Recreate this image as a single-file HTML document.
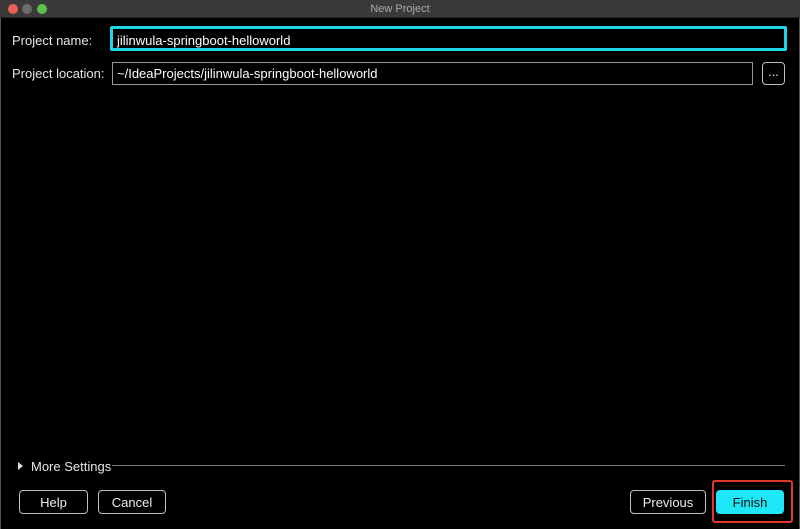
<!DOCTYPE html><html><head><style>
body{margin:0;width:800px;height:529px;background:#000;font-family:"Liberation Sans",sans-serif;position:relative;overflow:hidden;color:#e6e6e6}
.a{position:absolute}
.t{font-size:13px}
.btn{position:absolute;border:1px solid #bdbdbd;border-radius:4px;box-sizing:border-box;color:#eee;font-size:13px;text-align:center;line-height:23px}
</style></head><body>
<div class="a" style="left:0;top:0;width:800px;height:17px;background:#3a3a3a;border-bottom:1px solid #222"></div>
<div class="a" style="left:8px;top:4px;width:10px;height:10px;border-radius:50%;background:#ec5f57"></div>
<div class="a" style="left:22px;top:4px;width:10px;height:10px;border-radius:50%;background:#6b6b6b"></div>
<div class="a" style="left:37px;top:4px;width:10px;height:10px;border-radius:50%;background:#5ec04c"></div>
<div class="a" style="left:0;top:3px;width:800px;text-align:center;font-size:11px;color:#aaa">New Project</div>
<div class="a" style="left:0;top:18px;width:1px;height:511px;background:#555"></div>
<div class="a" style="left:799px;top:18px;width:1px;height:511px;background:#555"></div>
<div class="a t" style="left:12px;top:33px">Project name:</div>
<div class="a" style="left:110px;top:26px;width:677px;height:25px;box-sizing:border-box;border:3px solid #1ed6e8;border-radius:2px"></div>
<div class="a t" style="left:117px;top:33px;color:#fff">jilinwula-springboot-helloworld</div>
<div class="a t" style="left:12px;top:66px">Project location:</div>
<div class="a" style="left:112px;top:62px;width:641px;height:23px;box-sizing:border-box;border:1px solid #999"></div>
<div class="a t" style="left:117px;top:66px;color:#fff">~/IdeaProjects/jilinwula-springboot-helloworld</div>
<div class="btn" style="left:762px;top:62px;width:23px;height:23px;line-height:18px">...</div>
<div class="a" style="left:18px;top:462px;width:0;height:0;border-top:4px solid transparent;border-bottom:4px solid transparent;border-left:5px solid #ddd"></div>
<div class="a t" style="left:31px;top:459px">More Settings</div>
<div class="a" style="left:112px;top:465px;width:673px;height:1px;background:#777"></div>
<div class="btn" style="left:19px;top:490px;width:69px;height:24px">Help</div>
<div class="btn" style="left:98px;top:490px;width:68px;height:24px">Cancel</div>
<div class="btn" style="left:630px;top:490px;width:76px;height:24px">Previous</div>
<div class="btn" style="left:716px;top:490px;width:68px;height:24px;background:#1ee8f8;border-color:#1ee8f8;color:#111">Finish</div>
<div class="a" style="left:712px;top:480px;width:81px;height:43px;box-sizing:border-box;border:2px solid #e0392b;border-radius:3px"></div>
</body></html>
